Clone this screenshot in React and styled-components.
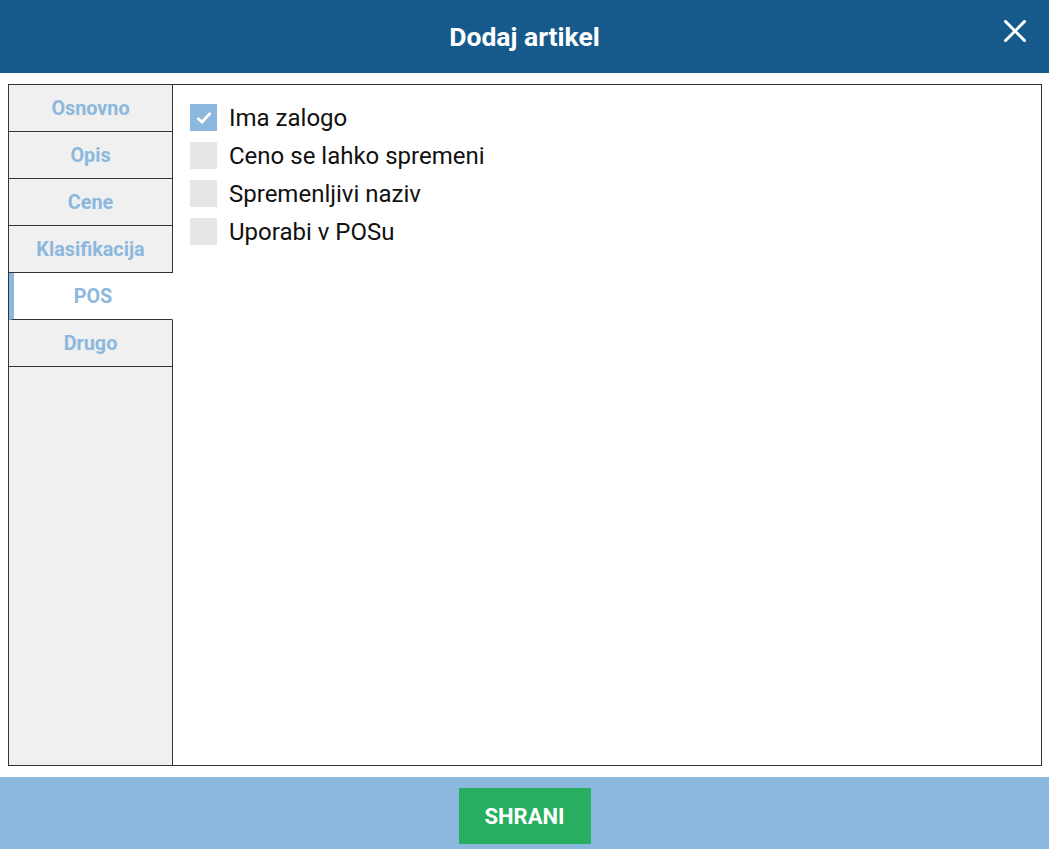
import React, { useState } from 'react';
import styled, { createGlobalStyle } from 'styled-components';

const GlobalStyle = createGlobalStyle`
  html, body {
    margin: 0;
    padding: 0;
    font-family: Roboto, "Liberation Sans", Arial, sans-serif;
    background: #ffffff;
  }
`;

const Page = styled.div`
  display: flex;
  flex-direction: column;
  height: 100vh;
`;

const Header = styled.header`
  position: relative;
  height: 73px;
  flex-shrink: 0;
  background-color: #165a8c;
  display: flex;
  align-items: center;
  justify-content: center;
`;

const Title = styled.h1`
  margin: 0;
  font-size: 26.5px;
  font-weight: 700;
  color: #ffffff;
`;

const CloseButton = styled.button`
  position: absolute;
  right: 20px;
  top: 17px;
  width: 28px;
  height: 28px;
  padding: 0;
  border: none;
  background: transparent;
  cursor: pointer;
  display: flex;
  align-items: center;
  justify-content: center;
`;

const Main = styled.main`
  flex: 1;
  padding: 11px 7px 11px 8px;
  display: flex;
  min-height: 0;
`;

const Frame = styled.div`
  flex: 1;
  display: flex;
  border: 1px solid #333333;
`;

const Sidebar = styled.nav`
  width: 164px;
  display: flex;
  flex-direction: column;
  background-color: #f0f0f0;
`;

const Tab = styled.div`
  height: 47px;
  display: flex;
  align-items: center;
  justify-content: center;
  box-sizing: border-box;
  font-size: 19.8px;
  font-weight: 700;
  color: #8cb8de;
  border-bottom: 1px solid #333333;
  border-right: 1px solid ${(p) => (p.$active ? 'transparent' : '#333333')};
  border-left: ${(p) => (p.$active ? '5px solid #8cb8de' : 'none')};
  background-color: ${(p) => (p.$active ? '#ffffff' : '#f0f0f0')};
  cursor: pointer;
`;

const SidebarFill = styled.div`
  flex: 1;
  border-right: 1px solid #333333;
`;

const Content = styled.section`
  flex: 1;
  padding: 19px 17px;
  display: flex;
  flex-direction: column;
  gap: 11px;
`;

const CheckRow = styled.label`
  display: flex;
  align-items: center;
  gap: 12px;
  font-size: 24px;
  line-height: 27px;
  color: #111111;
  cursor: pointer;
  height: 27px;
`;

const Label = styled.span`
  padding-top: 2px;
`;

const Box = styled.span`
  width: 27px;
  height: 27px;
  flex-shrink: 0;
  display: flex;
  align-items: center;
  justify-content: center;
  background-color: ${(p) => (p.$checked ? '#8cb8de' : '#e6e6e6')};
`;

const Footer = styled.footer`
  height: 72px;
  flex-shrink: 0;
  background-color: #8cb8de;
  display: flex;
  justify-content: center;
  align-items: flex-start;
  padding-top: 11px;
  box-sizing: border-box;
`;

const SaveButton = styled.button`
  width: 132px;
  height: 56px;
  border: none;
  background-color: #27ae60;
  color: #ffffff;
  font-family: Roboto, "Liberation Sans", Arial, sans-serif;
  font-size: 22px;
  font-weight: 700;
  cursor: pointer;
`;

const tabs = ['Osnovno', 'Opis', 'Cene', 'Klasifikacija', 'POS', 'Drugo'];

const options = [
  { label: 'Ima zalogo', checked: true },
  { label: 'Ceno se lahko spremeni', checked: false },
  { label: 'Spremenljivi naziv', checked: false },
  { label: 'Uporabi v POSu', checked: false },
];

export default function App() {
  const [active, setActive] = useState('POS');
  const [values, setValues] = useState(options.map((o) => o.checked));

  const toggle = (i) => setValues((v) => v.map((x, j) => (j === i ? !x : x)));

  return (
    <Page>
      <GlobalStyle />
      <Header>
        <Title>Dodaj artikel</Title>
        <CloseButton aria-label="Zapri">
          <svg width="22" height="22" viewBox="0 0 22 22">
            <path d="M1.5 1.5L20.5 20.5M20.5 1.5L1.5 20.5" stroke="#ffffff" strokeWidth="3" strokeLinecap="square" />
          </svg>
        </CloseButton>
      </Header>
      <Main>
        <Frame>
          <Sidebar>
            {tabs.map((t) => (
              <Tab key={t} $active={t === active} onClick={() => setActive(t)}>
                {t}
              </Tab>
            ))}
            <SidebarFill />
          </Sidebar>
          <Content>
            {options.map((o, i) => (
              <CheckRow key={o.label} onClick={() => toggle(i)}>
                <Box $checked={values[i]}>
                  {values[i] && (
                    <svg width="16" height="13" viewBox="0 0 16 13">
                      <path d="M1.5 7L6 11L14.5 2" fill="none" stroke="#ffffff" strokeWidth="2.8" />
                    </svg>
                  )}
                </Box>
                <Label>{o.label}</Label>
              </CheckRow>
            ))}
          </Content>
        </Frame>
      </Main>
      <Footer>
        <SaveButton>SHRANI</SaveButton>
      </Footer>
    </Page>
  );
}
